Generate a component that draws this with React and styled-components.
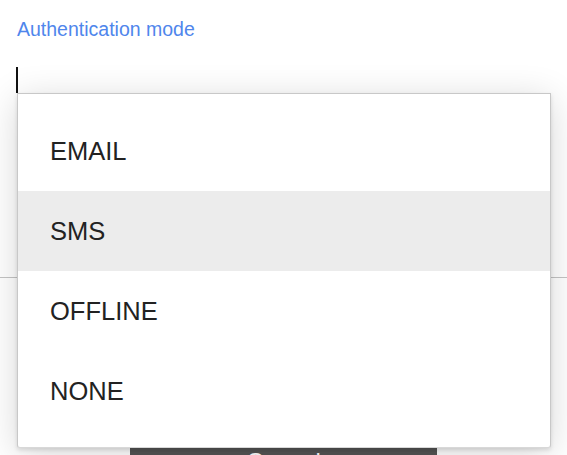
import styled, { createGlobalStyle } from 'styled-components';

const Global = createGlobalStyle`
  html, body {
    margin: 0;
    padding: 0;
    background: #fff;
  }
  body {
    font-family: "Liberation Sans", Arial, sans-serif;
  }
`;

const Dialog = styled.div`
  position: relative;
  width: 567px;
  height: 455px;
  overflow: hidden;
  background: #fff;
`;

const Form = styled.div`
  padding: 18px 16px 0 17px;
`;

const Label = styled.div`
  color: #4f86ec;
  font-size: 19.5px;
  line-height: 22px;
`;

const Field = styled.div`
  margin-top: 27px;
  margin-left: -1px;
  height: 26px;
  display: flex;
  align-items: flex-start;
`;

const Caret = styled.span`
  width: 2px;
  height: 26px;
  background: #111;
`;

const Divider = styled.div`
  margin-top: 184px;
  height: 1px;
  background: #c4c4c4;
`;

const Footer = styled.div`
  display: flex;
  justify-content: center;
  padding-top: 170px;
`;

const CancelButton = styled.button`
  width: 307px;
  height: 48px;
  border: 0;
  background: #555;
  color: #fff;
  font-family: "Liberation Sans", Arial, sans-serif;
  font-size: 24px;
  padding: 0;
  display: flex;
  justify-content: center;
  align-items: flex-start;
  line-height: 28px;
`;

const Menu = styled.ul`
  position: absolute;
  top: 93px;
  left: 17px;
  width: 532px;
  margin: 0;
  padding: 17px 0 16px;
  list-style: none;
  background: #fff;
  border: 1px solid #c8c8c8;
  border-bottom-color: #d8d8d8;
  border-radius: 0 0 3px 3px;
  box-shadow: 0 2px 4px rgba(0, 0, 0, 0.12), 0 6px 36px rgba(0, 0, 0, 0.16);
`;

const Option = styled.li`
  height: 80px;
  display: flex;
  align-items: center;
  padding-left: 32px;
  font-size: 25.5px;
  color: #222;
  background: ${p => (p.active ? '#ececec' : 'transparent')};
`;

const options = ['EMAIL', 'SMS', 'OFFLINE', 'NONE'];

export default function App() {
  return (
    <Dialog>
      <Global />
      <Form>
        <Label>Authentication mode</Label>
        <Field>
          <Caret />
        </Field>
      </Form>
      <Divider />
      <Footer>
        <CancelButton type="button">Cancel</CancelButton>
      </Footer>
      <Menu>
        {options.map(name => (
          <Option key={name} active={name === 'SMS'}>
            {name}
          </Option>
        ))}
      </Menu>
    </Dialog>
  );
}
